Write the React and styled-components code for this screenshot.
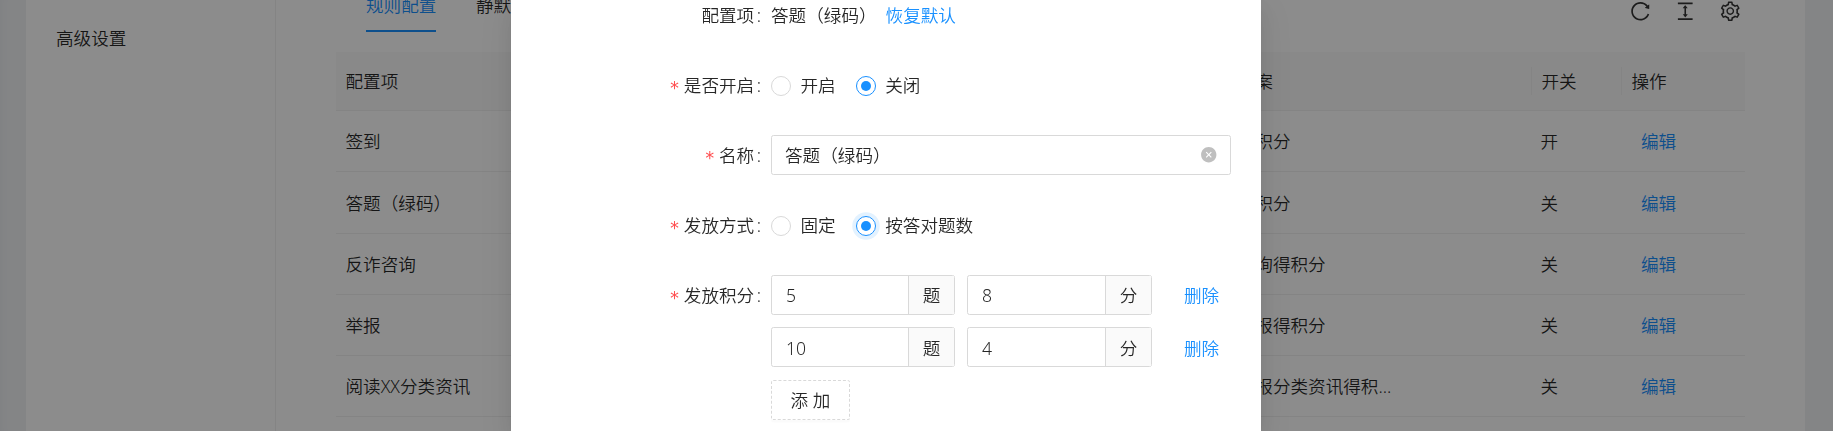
import React from "react";
import styled, { createGlobalStyle, css } from "styled-components";
import {
  AiOutlineReload,
  AiOutlineColumnHeight,
  AiOutlineSetting,
  AiFillCloseCircle,
} from "react-icons/ai";

const GlobalStyle = createGlobalStyle`
  *, *::before, *::after { box-sizing: border-box; }
  html, body { margin: 0; height: 100%; overflow: hidden; }
  body, button, input {
    font-family: "Noto Sans", "Noto Sans CJK SC", sans-serif;
    font-size: 17.6px;
    font-weight: 350;
    line-height: 27.5px;
    color: rgba(0, 0, 0, 0.85);
  }
`;

const Page = styled.div`
  height: 431px;
  padding: 0 28px 0 26px;
  background: #f0f2f5;
  box-shadow: inset 8px 0 8px -6px rgba(0, 0, 0, 0.03);
  overflow: hidden;
`;

const Card = styled.div`
  display: flex;
  height: 100%;
  background: #fff;
`;

const SideMenu = styled.nav`
  width: 250px;
  padding: 25px 30px;
  border-right: 1px solid #f0f0f0;
`;

const Content = styled.main`
  flex: 1;
  min-width: 0;
  padding: 0 60px;
`;

const Toolbar = styled.div`
  display: flex;
  justify-content: space-between;
  height: 52px;
`;

const Tabs = styled.div`
  display: flex;
  gap: 40px;
  height: 32px;
  padding-left: 30px;
`;

const Tab = styled.div`
  display: flex;
  align-items: flex-end;
  width: ${(p) => (p.$active ? "70px" : "auto")};
  height: 32px;
  padding-bottom: ${(p) => (p.$active ? 11 : 13)}px;
  border-bottom: ${(p) => (p.$active ? "2px solid #1890ff" : "0")};
  color: ${(p) => (p.$active ? "#1890ff" : "inherit")};
  white-space: nowrap;
`;

const ToolIcons = styled.div`
  display: flex;
  gap: 22.5px;
  padding: 0 4px 0 0;
  font-size: 22.5px;
  line-height: 0;
  color: rgba(0, 0, 0, 0.8);
`;

const columns = css`
  display: grid;
  grid-template-columns: 857px 338px 90px 1fr;
  align-items: center;
  border-bottom: 1px solid #f0f0f0;
`;

const HeadRow = styled.div`
  ${columns}
  height: 59px;
  background: #fafafa;
`;

const BodyRow = styled.div`
  ${columns}
  height: 61.25px;
`;

const Cell = styled.div`
  padding: 2px 0 0 ${(p) => (p.$action ? 20 : 9.5)}px;
  white-space: nowrap;
`;

const HeadCell = styled(Cell)`
  height: 28px;
  padding-top: 1px;
  border-left: ${(p) => (p.$divided ? "1px solid #f0f0f0" : "0")};
`;

const Link = styled.a`
  color: #1890ff;
  cursor: pointer;
`;

const Mask = styled.div`
  position: fixed;
  inset: 0;
  display: flex;
  justify-content: center;
  padding-right: 61px;
  background: rgba(0, 0, 0, 0.45);
`;

const Modal = styled.div`
  width: 750px;
  background: #fff;
  box-shadow: 0 4px 8px -5px rgba(0, 0, 0, 0.12),
    0 8px 20px rgba(0, 0, 0, 0.08), 0 11px 35px 10px rgba(0, 0, 0, 0.05);
`;

const Form = styled.form`
  display: flex;
  flex-direction: column;
  gap: 30px;
  padding: 0 30px;
  margin-top: -5px;
`;

const FormItem = styled.div`
  display: flex;
  align-items: flex-start;
`;

const Label = styled.label`
  display: flex;
  align-items: center;
  justify-content: flex-end;
  width: 230px;
  height: 40px;
  padding: 2px 10px 0 0;

  &::after {
    content: ":";
    margin-left: 2.5px;
  }
`;

const Star = styled.span`
  margin-right: 4px;
  padding-top: 5px;
  font-family: "DejaVu Sans Mono", monospace;
  font-size: 17.5px;
  font-weight: 400;
  line-height: 1;
  color: #ff4d4f;
`;

const Control = styled.div`
  display: flex;
  flex: 1;
  align-items: center;
  height: ${(p) => (p.$tall ? "auto" : "40px")};
  padding-top: ${(p) => (p.$text ? 2 : 0)}px;
  gap: ${(p) => p.$gap || 0}px;
`;

const Radio = styled.span`
  display: flex;
  align-items: center;
  gap: 9.5px;
`;

const Dot = styled.span`
  display: flex;
  align-items: center;
  justify-content: center;
  width: 20px;
  height: 20px;
  border: 1px solid ${(p) => (p.$checked ? "#1890ff" : "#d9d9d9")};
  border-radius: 50%;
  box-shadow: ${(p) =>
    p.$focused ? "0 0 0 3.75px rgba(24, 144, 255, 0.12)" : "none"};

  &::after {
    content: "";
    width: 10px;
    height: 10px;
    border-radius: 50%;
    background: ${(p) => (p.$checked ? "#1890ff" : "transparent")};
  }
`;

const TextField = styled.div`
  display: flex;
  flex: 1;
  align-items: center;
  justify-content: space-between;
  height: 40px;
  padding: 0 13px;
  border: 1px solid #d9d9d9;
  border-radius: 2.5px;
`;

const FieldText = styled.span`
  padding-top: 2px;
`;

const ClearIcon = styled(AiFillCloseCircle)`
  width: 17.5px;
  height: 17.5px;
  color: #bfbfbf;
`;

const Rules = styled.div`
  display: flex;
  flex-direction: column;
  align-items: flex-start;
`;

const RuleRow = styled.div`
  display: flex;
  align-items: center;
  gap: 12px;
  margin-bottom: 12px;
`;

const Group = styled.div`
  display: flex;
  width: ${(p) => p.$width}px;
  height: 40px;
  border: 1px solid #d9d9d9;
  border-radius: 2.5px;
`;

const GroupValue = styled.span`
  display: flex;
  flex: 1;
  align-items: center;
  padding: ${(p) => p.$drop}px 14px 0;
`;

const Addon = styled.span`
  display: flex;
  align-items: center;
  justify-content: center;
  width: 46px;
  padding-top: ${(p) => p.$drop}px;
  border-left: 1px solid #d9d9d9;
  background: #fafafa;
`;

const RemoveLink = styled(Link)`
  padding: ${(p) => p.$drop}px 0 0 20px;
`;

const AddButton = styled.button`
  width: 79px;
  height: 40px;
  margin-top: 1px;
  padding: 2px 0 0;
  border: 1px dashed #d9d9d9;
  border-radius: 2.5px;
  background: #fff;
  box-shadow: 0 2.5px 0 rgba(0, 0, 0, 0.015);
`;

const rows = [
  ["签到", "签到得积分", "开"],
  ["答题（绿码）", "答题得积分", "关"],
  ["反诈咨询", "反诈咨询得积分", "关"],
  ["举报", "反诈举报得积分", "关"],
  ["阅读XX分类资讯", "阅读举报分类资讯得积...", "关"],
];

const rules = [
  { count: 5, score: 8, drop: 2 },
  { count: 10, score: 4, drop: 4 },
];

function RadioItem({ checked, focused, children }) {
  return (
    <Radio>
      <Dot $checked={checked} $focused={focused} />
      {children}
    </Radio>
  );
}

function Item({ label, required, gap, text, tall, children }) {
  return (
    <FormItem>
      <Label>
        {required && <Star>*</Star>}
        {label}
      </Label>
      <Control $gap={gap} $text={text} $tall={tall}>
        {children}
      </Control>
    </FormItem>
  );
}

export default function App() {
  return (
    <>
      <GlobalStyle />
      <Page>
        <Card>
          <SideMenu>高级设置</SideMenu>
          <Content>
            <Toolbar>
              <Tabs>
                <Tab $active>规则配置</Tab>
                <Tab>静默</Tab>
              </Tabs>
              <ToolIcons>
                <AiOutlineReload />
                <AiOutlineColumnHeight />
                <AiOutlineSetting />
              </ToolIcons>
            </Toolbar>
            <HeadRow>
              <HeadCell>配置项</HeadCell>
              <HeadCell>积分文案</HeadCell>
              <HeadCell $divided>开关</HeadCell>
              <HeadCell $divided>操作</HeadCell>
            </HeadRow>
            {rows.map(([name, copy, state]) => (
              <BodyRow key={name}>
                <Cell>{name}</Cell>
                <Cell>{copy}</Cell>
                <Cell>{state}</Cell>
                <Cell $action>
                  <Link>编辑</Link>
                </Cell>
              </BodyRow>
            ))}
          </Content>
        </Card>
      </Page>
      <Mask>
        <Modal>
          <Form>
            <Item label="配置项" gap={9} text>
              <span>答题（绿码）</span>
              <Link>恢复默认</Link>
            </Item>
            <Item label="是否开启" required gap={20} text>
              <RadioItem>开启</RadioItem>
              <RadioItem checked>关闭</RadioItem>
            </Item>
            <Item label="名称" required>
              <TextField>
                <FieldText>答题（绿码）</FieldText>
                <ClearIcon />
              </TextField>
            </Item>
            <Item label="发放方式" required gap={20} text>
              <RadioItem>固定</RadioItem>
              <RadioItem checked focused>
                按答对题数
              </RadioItem>
            </Item>
            <Item label="发放积分" required tall>
              <Rules>
                {rules.map(({ count, score, drop }) => (
                  <RuleRow key={count}>
                    <Group $width={184}>
                      <GroupValue $drop={drop}>{count}</GroupValue>
                      <Addon $drop={drop}>题</Addon>
                    </Group>
                    <Group $width={185}>
                      <GroupValue $drop={drop}>{score}</GroupValue>
                      <Addon $drop={drop}>分</Addon>
                    </Group>
                    <RemoveLink $drop={drop}>删除</RemoveLink>
                  </RuleRow>
                ))}
                <AddButton type="button">添 加</AddButton>
              </Rules>
            </Item>
          </Form>
        </Modal>
      </Mask>
    </>
  );
}
